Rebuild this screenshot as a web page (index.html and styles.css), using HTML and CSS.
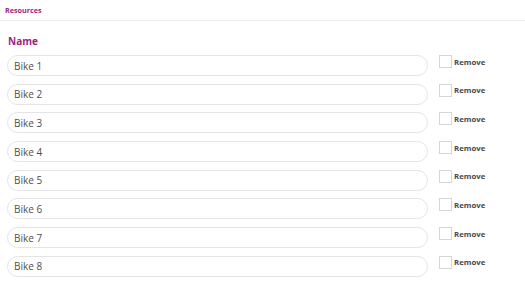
FILE: index.html
```html
<!DOCTYPE html>
<html lang="en">
<head>
    <meta charset="UTF-8">
    <title>Resources</title>
    <link rel="stylesheet" href="styles.css">
</head>
<body>
    <div class="topbar">Resources</div>
    <div class="content">
        <h2 class="label">Name</h2>
        <div class="rows">
            <div class="row"><input class="name-input" value="Bike 1"><label class="remove"><span class="box"></span>Remove</label></div>
            <div class="row"><input class="name-input" value="Bike 2"><label class="remove"><span class="box"></span>Remove</label></div>
            <div class="row"><input class="name-input" value="Bike 3"><label class="remove"><span class="box"></span>Remove</label></div>
            <div class="row"><input class="name-input" value="Bike 4"><label class="remove"><span class="box"></span>Remove</label></div>
            <div class="row"><input class="name-input" value="Bike 5"><label class="remove"><span class="box"></span>Remove</label></div>
            <div class="row"><input class="name-input" value="Bike 6"><label class="remove"><span class="box"></span>Remove</label></div>
            <div class="row"><input class="name-input" value="Bike 7"><label class="remove"><span class="box"></span>Remove</label></div>
            <div class="row"><input class="name-input" value="Bike 8"><label class="remove"><span class="box"></span>Remove</label></div>
        </div>
    </div>
</body>
</html>
```

FILE: styles.css
```css
body {
    margin: 0;
    font-family: "Open Sans", Arial, sans-serif;
    background: white;
    overflow: hidden;
}

.topbar {
    height: 20px;
    line-height: 20px;
    padding-left: 5px;
    font-size: 7.2px;
    font-weight: bold;
    color: #a1237e;
    border-bottom: 1px solid #ececec;
}

.content {
    padding: 0 7px;
}

.label {
    margin: 13px 0 0 1px;
    font-size: 10px;
    font-weight: bold;
    color: #a1237e;
    height: 21px;
}

.rows {
    display: flex;
    flex-direction: column;
    gap: 7.7px;
}

.row {
    display: flex;
    align-items: flex-start;
}

.name-input {
    box-sizing: border-box;
    width: 421px;
    height: 21px;
    padding: 0 6px;
    border: 1px solid #e4e4e4;
    border-radius: 11px;
    font-family: "Open Sans", Arial, sans-serif;
    font-size: 10px;
    color: #4f4f4f;
    outline: none;
}

.remove {
    display: flex;
    align-items: center;
    margin-left: 11px;
    font-size: 7.8px;
    font-weight: bold;
    color: #4a4a4a;
}

.box {
    box-sizing: border-box;
    width: 13px;
    height: 13px;
    border: 1px solid #d6d6d6;
    margin-right: 2px;
}
```
